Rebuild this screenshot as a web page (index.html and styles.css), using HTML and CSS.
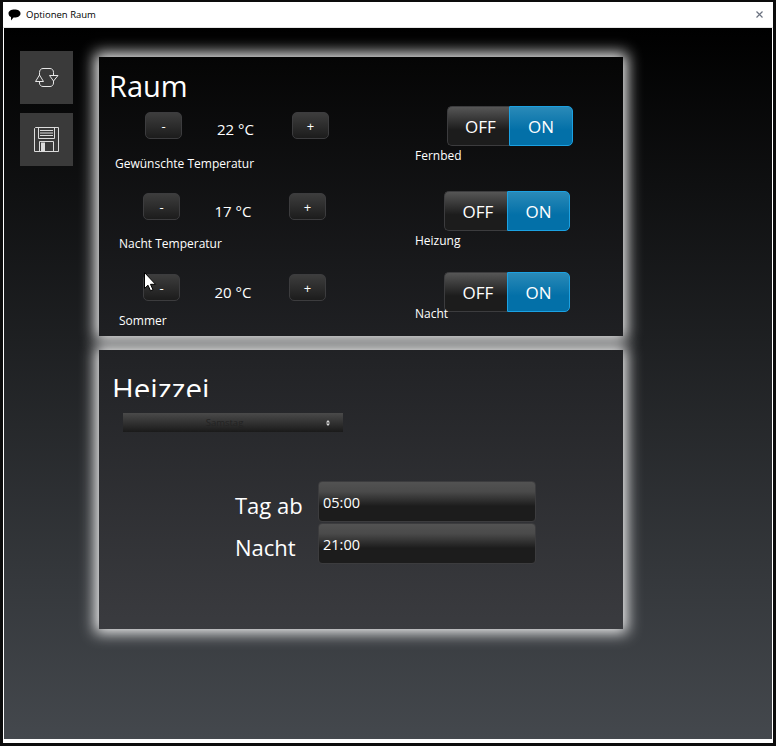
FILE: index.html
```html
<!DOCTYPE html>
<html lang="de">
<head>
  <meta charset="UTF-8">
  <meta name="viewport" content="width=device-width, initial-scale=1.0">
  <title>Optionen Raum</title>
  <link rel="stylesheet" href="styles.css">
</head>
<body>
  <div class="window">
    <div class="titlebar">
      <svg class="app-icon" width="13" height="12" viewBox="0 0 13 12"><path d="M6.500 0.500C10 0.500 12.500 2 12.500 4.500S10 8.500 6.500 8.500H5.500L3 11.500V8C1.500 7.500 0.500 6 0.500 4.500 0.500 2 3 0.500 6.500 0.500Z" fill="#000"/></svg>
      <span class="title">Optionen Raum</span>
      <svg class="close" width="7" height="7" viewBox="0 0 7 7"><path d="M0.500 0.500L6.500 6.500M6.500 0.500L0.500 6.500" stroke="#6b7280" stroke-width="1.200"/></svg>
    </div>
    <div class="content">
      <div class="sidebar">
        <div class="side-btn">
          <svg width="24" height="19" viewBox="0 0 24 19" fill="none" stroke="#e6e6e6" stroke-width="1"><path d="M4.500 7V4.500C4.500 2 6 0.500 8 0.500H15C17 0.500 18.500 2 18.500 4.500V7.500"/><path d="M18.500 13V15C18.500 17 17 18.500 15 18.500H8C6 18.500 4.500 17 4.500 15V13.500"/><path d="M0.500 13.500H8.500L4.500 7Z"/><path d="M14.500 7.500H23L18.500 13Z"/></svg>
        </div>
        <div class="side-btn">
          <svg width="25" height="25" viewBox="0 0 25 25" fill="none" stroke="#dcdcdc" stroke-width="1"><path d="M1.500 0.500H24.500V24.500H0.500V1.500Z"/><path d="M4.500 0.500V11.500H20.500V0.500"/><path d="M6 3.500H19M6 6H19M6 8.500H19" stroke-width="1.200"/><path d="M5.500 24.500V14.500H19.500V24.500"/><rect x="7.500" y="16" width="3" height="8.500" fill="#dcdcdc"/></svg>
        </div>
      </div>
      <div class="panels">
        <section class="panel panel-raum">
          <h2 class="heading">Raum</h2>
          <div class="columns">
            <div class="temps">
              <div class="temp temp-first">
                <div class="stepper">
                  <button class="step">-</button>
                  <span class="value">22 °C</span>
                  <button class="step">+</button>
                </div>
                <div class="label">Gewünschte Temperatur</div>
              </div>
              <div class="temp temp-second">
                <div class="stepper">
                  <button class="step">-</button>
                  <span class="value">17 °C</span>
                  <button class="step">+</button>
                </div>
                <div class="label">Nacht Temperatur</div>
              </div>
              <div class="temp temp-third">
                <div class="stepper">
                  <button class="step">-</button>
                  <span class="value">20 °C</span>
                  <button class="step">+</button>
                </div>
                <div class="label">Sommer</div>
              </div>
            </div>
            <div class="switches">
              <div class="switch-row switch-first">
                <div class="toggle"><span class="off">OFF</span><span class="on">ON</span></div>
                <div class="label">Fernbed</div>
              </div>
              <div class="switch-row switch-second">
                <div class="toggle"><span class="off">OFF</span><span class="on">ON</span></div>
                <div class="label">Heizung</div>
              </div>
              <div class="switch-row switch-third">
                <div class="toggle"><span class="off">OFF</span><span class="on">ON</span></div>
                <div class="label label-tight">Nacht</div>
              </div>
            </div>
          </div>
        </section>
        <section class="panel panel-heiz">
          <div class="heading-clip"><h2 class="heading">Heizzei</h2></div>
          <div class="select">
            <span class="select-text">Samstag</span>
            <svg width="4" height="6" viewBox="0 0 4 6"><path d="M2 0L4 2.500H0ZM2 6L0 3.500H4Z" fill="#ddd"/></svg>
          </div>
          <div class="times">
            <div class="time-row">
              <span class="time-label">Tag ab</span>
              <div class="time-input">05:00</div>
            </div>
            <div class="time-row">
              <span class="time-label">Nacht</span>
              <div class="time-input">21:00</div>
            </div>
          </div>
        </section>
      </div>
    </div>
  </div>
  <svg class="cursor" width="13" height="20" viewBox="0 0 13 20"><path d="M0.500 0.500V16.500L4 13.200L6.500 18.800L9 17.700L6.500 12.300H11.500Z" fill="#fff" stroke="#000"/></svg>
</body>
</html>
```

FILE: styles.css
```css
* {
  box-sizing: border-box;
}
html, body {
  height: 100%;
}
body {
  margin: 0;
  background: #0c0c0c;
  font-family: "Open Sans", "Noto Sans", sans-serif;
  color: #fff;
  overflow: hidden;
}
.window {
  width: 770px;
  height: 741px;
  margin: 2px 0 0 3px;
  display: flex;
  flex-direction: column;
  background: #fff;
}
.titlebar {
  height: 26px;
  flex: none;
  display: flex;
  align-items: center;
  padding: 0 10px 0 5px;
  border-bottom: 1px solid #e6e6e6;
  background: #fff;
  color: #000;
}
.app-icon {
  margin-right: 5px;
}
.title {
  font-size: 9.5px;
  flex: 1;
}
.content {
  margin: 0 1px 4px 1px;
  flex: 1;
  display: flex;
  background: linear-gradient(#000 0%, #44484d 100%);
}
.sidebar {
  width: 95px;
  padding: 23px 0 0 16px;
  display: flex;
  flex-direction: column;
  gap: 9px;
}
.side-btn {
  width: 53px;
  height: 53px;
  background: #3a3a3a;
  display: flex;
  align-items: center;
  justify-content: center;
}
.panels {
  padding-top: 29px;
  display: flex;
  flex-direction: column;
  gap: 14px;
  isolation: isolate;
}
.panel {
  position: relative;
  width: 524px;
  height: 279px;
}
/* glow sits behind both panels so neither one paints over the other */
.panel::before {
  content: "";
  position: absolute;
  inset: 0;
  z-index: -1;
  box-shadow: 0 0 14px 4px rgba(255, 255, 255, 0.95);
}
.panel-raum {
  padding: 9px 0 0 10px;
  background: linear-gradient(#050505, #1f2023);
}
.panel-heiz {
  padding: 19px 0 0 14px;
  background: linear-gradient(#212225, #3a3b3f);
}
.heading {
  margin: 0;
  font-size: 29px;
  font-weight: 400;
  line-height: 40px;
}
.heading-clip {
  height: 28px;
  overflow: hidden;
}
.heading-clip .heading {
  margin-left: -1px;
  font-size: 29.5px;
}
.columns {
  display: flex;
}
.temps {
  width: 306px;
}
.temp-first {
  padding: 6px 0 0 6px;
}
.temp-first .stepper {
  padding-left: 30px;
}
.temp-first .label {
  margin-top: 10px;
}
.temp-second {
  padding: 21px 0 0 10px;
}
.temp-second .stepper {
  padding-left: 24px;
}
.temp-second .value {
  width: 109px;
  line-height: 36px;
  height: 34px;
}
.temp-second .label {
  margin-top: 9px;
}
.temp-third {
  padding: 22px 0 0 10px;
}
.temp-third .stepper {
  padding-left: 24px;
}
.temp-third .value {
  width: 109px;
  line-height: 36px;
  height: 34px;
}
.temp-third .label {
  margin-top: 5px;
}
.stepper {
  display: flex;
  align-items: flex-start;
}
.step {
  width: 37px;
  height: 27px;
  padding: 0;
  border: 1px solid #3c3c3e;
  border-radius: 5px;
  background: linear-gradient(#3d3d3d, #1c1c1c);
  color: #fff;
  font-family: inherit;
  font-size: 13px;
}
.value {
  width: 110px;
  padding-right: 3px;
  text-align: center;
  font-size: 15px;
  line-height: 34px;
}
.label {
  font-size: 12px;
  line-height: 16px;
}
.switch-first .toggle {
  margin-left: 32px;
}
.switch-second {
  padding-top: 27px;
}
.switch-second .toggle {
  margin-left: 29px;
}
.switch-third {
  padding-top: 23px;
}
.switch-third .toggle {
  margin-left: 29px;
}
.toggle {
  display: flex;
  width: 126px;
  height: 40px;
  margin-bottom: 2px;
  font-size: 17px;
  line-height: 40px;
  text-align: center;
}
.off {
  width: 62px;
  padding-left: 4px;
  border: 1px solid #3c3c3e;
  border-right: 0;
  border-radius: 5px 0 0 5px;
  background: linear-gradient(#565656 0%, #1c1c1c 60%, #1c1c1c 100%);
}
.on {
  flex: 1;
  border: 1px solid #1ba1e2;
  border-radius: 0 5px 5px 0;
  background: linear-gradient(#2a8ab8 0%, #0370a8 60%, #0370a8 100%);
}
.switch-second .off,
.switch-third .off {
  width: 63px;
}
.label-tight {
  margin-top: -8px;
}
.select {
  width: 220px;
  height: 19px;
  margin: 16px 0 0 10px;
  padding: 0 13px 0 0;
  display: flex;
  align-items: center;
  background: linear-gradient(#4a4a4a, #1a1a1a);
}
.select-text {
  flex: 1;
  text-align: center;
  font-size: 9.5px;
  color: #232323;
}
.times {
  margin: 49px 0 0 120px;
  display: flex;
  flex-direction: column;
  gap: 1px;
}
.time-row {
  display: flex;
  align-items: center;
}
.time-label {
  width: 85px;
  padding-left: 2px;
  margin: 3px 0 -3px 0;
  font-size: 22px;
  line-height: 40px;
}
.time-input {
  width: 218px;
  height: 41px;
  padding-left: 4px;
  border: 1px solid #3c3c3e;
  border-radius: 4px;
  background: linear-gradient(#525252 0%, #4a4a4a 25%, #1c1c1c 62%, #1c1c1c 100%);
  font-size: 14.5px;
  line-height: 42px;
}
.cursor {
  position: absolute;
  left: 144px;
  top: 272px;
}
```
